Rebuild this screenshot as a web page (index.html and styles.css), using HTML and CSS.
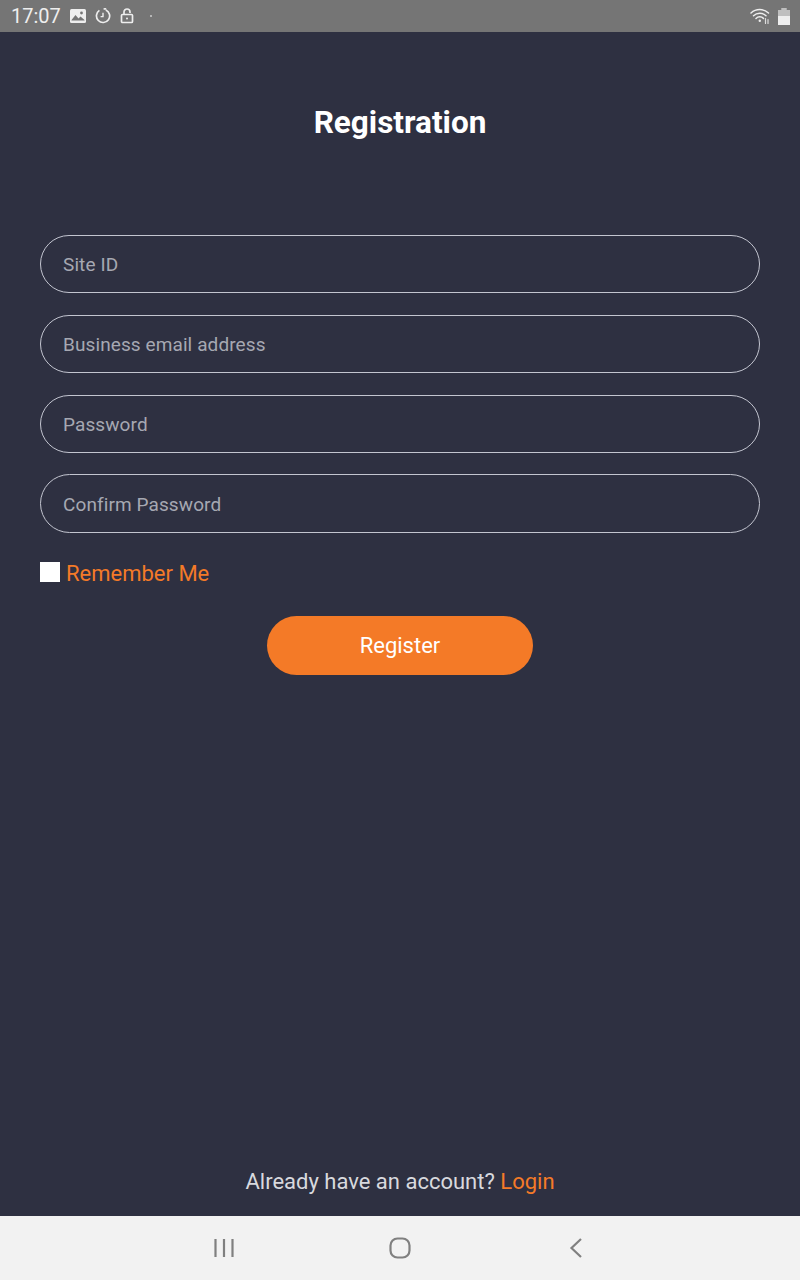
FILE: index.html
```html
<!DOCTYPE html>
<html lang="en">
<head>
<meta charset="utf-8">
<title>Registration</title>
<link rel="stylesheet" href="styles.css">
</head>
<body>
<div class="screen">
  <header class="status">
    <div class="status-left">
      <span class="time">17:07</span>
      <svg class="ic" width="16" height="14" viewBox="0 0 16 14"><rect x="0" y="0" width="16" height="14" rx="1.5" fill="#eee"/><path d="M1.5 11l4-5 3 3.5 2-2 4 3.5v.5h-13z" fill="#757575"/><circle cx="11.5" cy="4" r="1.4" fill="#757575"/></svg>
      <svg class="ic" width="16" height="16" viewBox="0 0 16 16" fill="none" stroke="#eee" stroke-width="1.7"><path d="M10.8 1.9A6.6 6.6 0 1 1 4.4 2.4"/><path d="M8 4.8v3.8H5.6" stroke-width="1.4"/><path d="M8.6 .9h2.6" /></svg>
      <svg class="ic" width="14" height="16" viewBox="0 0 14 16" fill="none" stroke="#eee" stroke-width="1.7"><rect x="1.5" y="6.5" width="11" height="8" rx="1"/><path d="M4 6.5V4a3 3 0 0 1 6 0v1"/><circle cx="7" cy="10.5" r="1" fill="#eee" stroke="none"/></svg>
      <span class="dot"></span>
    </div>
    <div class="status-right">
      <svg width="21" height="18" viewBox="0 0 21 18" fill="none" stroke="#eee" stroke-width="1.5" stroke-linecap="round"><path d="M1 6a13 13 0 0 1 17.5 0"/><path d="M3.5 8.7a9 9 0 0 1 12.5 0"/><path d="M6 11.4a5.2 5.2 0 0 1 7.5 0"/><circle cx="9.8" cy="13.8" r="1.2" fill="#eee" stroke="none"/><path d="M15.5 11.5v5M18 12.5v4" stroke-width="1.2" opacity=".85"/></svg>
      <svg width="12" height="17" viewBox="0 0 12 17"><path d="M3.5 0h5v2H12v15H0V2h3.5z" fill="#eee"/><path d="M0 2h12v6H0zM3.5 0h5v2h-5z" fill="#999" opacity=".55"/></svg>
    </div>
  </header>

  <main class="content">
    <h1 class="title">Registration</h1>
    <form class="form">
      <div class="field">Site ID</div>
      <div class="field">Business email address</div>
      <div class="field">Password</div>
      <div class="field">Confirm Password</div>
      <div class="remember"><span class="check"></span><span class="remember-label">Remember Me</span></div>
      <div class="button">Register</div>
    </form>
    <p class="login">Already have an account? <span class="accent">Login</span></p>
  </main>

  <nav class="nav">
    <span class="nav-slot"><svg width="20" height="20" viewBox="0 0 20 20" fill="none" stroke="#808080" stroke-width="2.2"><path d="M1.5 1v18M10 1v18M18.5 1v18"/></svg></span>
    <span class="nav-slot"><svg width="22" height="22" viewBox="0 0 22 22" fill="none" stroke="#808080" stroke-width="2.2"><rect x="1.5" y="1.5" width="19" height="19" rx="7"/></svg></span>
    <span class="nav-slot"><svg width="14" height="20" viewBox="0 0 14 20" fill="none" stroke="#808080" stroke-width="2.2"><path d="M12 1L2.5 10 12 19"/></svg></span>
  </nav>
</div>
</body>
</html>
```

FILE: styles.css
```css
* { box-sizing: border-box; }
html, body { margin: 0; padding: 0; }
body { font-family: Roboto, "Liberation Sans", sans-serif; background: #2e3041; }
.screen { width: 800px; height: 1280px; display: flex; flex-direction: column; overflow: hidden; }

.status { height: 32px; flex: none; background: #757575; display: flex; justify-content: space-between; align-items: center; padding: 0 10px 0 11px; color: #eee; }
.status-left { display: flex; align-items: center; }
.time { font-size: 20px; line-height: 32px; margin-right: 9px; }
.ic { margin-right: 9px; }
.dot { width: 2px; height: 2px; margin-left: 7px; border-radius: 50%; background: #ccc; }
.status-right { display: flex; align-items: center; gap: 7px; }

.content { flex: 1; display: flex; flex-direction: column; padding: 0 40px; }
.title { margin: 71px 0 0; height: 40px; line-height: 40px; font-size: 31.5px; font-weight: 700; color: #fff; text-align: center; }
.form { margin-top: 92px; display: flex; flex-direction: column; flex: 1; }
.field { height: 58px; border: 1px solid #c3c5d0; border-radius: 30px; padding: 1px 22px 0; margin-bottom: 22px; display: flex; align-items: center; font-size: 19px; letter-spacing: .1px; color: #a6a8b2; }
.field:nth-child(3) { margin-bottom: 21px; }
.field:nth-child(4) { height: 59px; margin-bottom: 21px; }
.remember { display: flex; align-items: center; margin-top: 7px; height: 24px; }
.check { width: 20px; height: 20px; background: #fff; margin-right: 6px; margin-top: -3px; }
.remember-label { font-size: 22px; color: #f47a28; }
.button { align-self: center; margin-top: 31px; width: 266px; height: 59px; border-radius: 30px; background: #f47a27; color: #fff; font-size: 22px; display: flex; align-items: center; justify-content: center; }
.login { margin: 0 0 20px; text-align: center; font-size: 22px; line-height: 28px; color: #d8d9de; }
.accent { color: #f47a28; }

.nav { height: 64px; flex: none; background: #f2f2f2; display: flex; align-items: center; justify-content: center; }
.nav-slot { width: 176px; display: flex; justify-content: center; align-items: center; }
```
